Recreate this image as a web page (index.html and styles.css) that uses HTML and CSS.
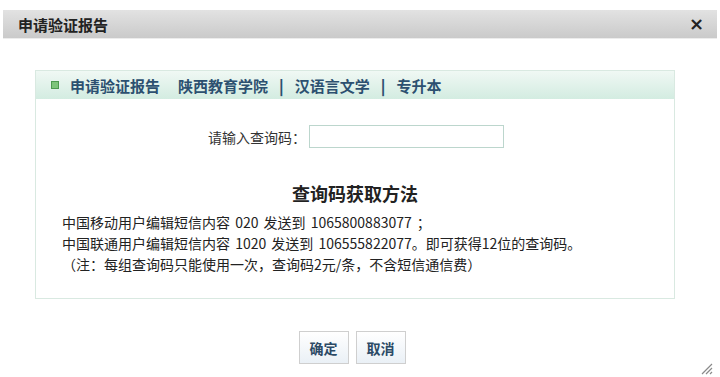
FILE: index.html
```html
<!DOCTYPE html>
<html lang="zh-CN">
<head>
    <meta charset="UTF-8">
    <title>申请验证报告</title>
    <link rel="stylesheet" href="styles.css">
</head>
<body>
    <div class="dialog">
        <div class="dialog-title">
            <span class="dialog-title-text">申请验证报告</span>
            <span class="dialog-close">×</span>
        </div>
        <div class="dialog-body">
            <div class="report-box">
                <div class="report-head">
                    <span class="head-mark"></span>
                    <span class="head-name">申请验证报告</span>
                    <span class="head-info">陕西教育学院<b class="sep">|</b>汉语言文学<b class="sep">|</b>专升本</span>
                </div>
                <div class="report-content">
                    <div class="query-row">
                        <label class="query-label" for="queryCode">请输入查询码：</label>
                        <input type="text" class="query-input" id="queryCode">
                    </div>
                    <h2 class="method-title">查询码获取方法</h2>
                    <p class="method-line">中国移动用户编辑短信内容 020 发送到 1065800883077 ；</p>
                    <p class="method-line">中国联通用户编辑短信内容 1020 发送到 106555822077。即可获得12位的查询码。</p>
                    <p class="method-line">（注：每组查询码只能使用一次，查询码2元/条，不含短信通信费）</p>
                </div>
            </div>
            <div class="button-row">
                <button class="dlg-button">确定</button>
                <button class="dlg-button">取消</button>
            </div>
        </div>
        <svg class="resize-grip" width="14" height="14" viewBox="0 0 14 14">
            <path d="M13 3 L3 13 M13 7 L7 13 M13 11 L11 13" stroke="#8a8a8a" stroke-width="1.2" fill="none"/>
        </svg>
    </div>
</body>
</html>
```

FILE: styles.css
```css
body {
    margin: 0;
    background: #fff;
    font-family: "Noto Sans CJK SC", "Liberation Sans", sans-serif;
    color: #333;
}

.dialog {
    position: relative;
    width: 720px;
    height: 377px;
    padding-top: 10px;
    box-sizing: border-box;
    overflow: hidden;
}

.dialog-title {
    margin: 0 3px;
    height: 28px;
    display: flex;
    align-items: center;
    justify-content: space-between;
    padding: 0 13px 0 15px;
    background: linear-gradient(#e2e2e2, #cacaca);
    border-bottom: 1px solid #ececec;
}

.dialog-title-text {
    font-size: 15px;
    font-weight: bold;
    color: #222;
}

.dialog-close {
    font-family: "DejaVu Sans", sans-serif;
    font-size: 18px;
    font-weight: bold;
    color: #222;
    line-height: 1;
}

.dialog-body {
    padding: 31px 45px 0 35px;
}

.report-box {
    border: 1px solid #d9e9e1;
}

.report-head {
    height: 28px;
    display: flex;
    align-items: center;
    padding-left: 15px;
    background: linear-gradient(#f0f8f4, #d3ece1);
    font-size: 15px;
    font-weight: bold;
    color: #2c5070;
}

.head-mark {
    width: 6px;
    height: 6px;
    border: 1px solid #4b9a4f;
    background: #7cc47a;
    margin-right: 11px;
}

.head-name {
    margin-right: 18px;
}

.sep {
    margin: 0 11px;
}

.report-content {
    padding: 26px 0 23px 26px;
}

.query-row {
    display: flex;
    align-items: center;
    height: 23px;
    padding-left: 146px;
}

.query-label {
    font-size: 14px;
    color: #333;
}

.query-input {
    width: 195px;
    height: 23px;
    box-sizing: border-box;
    margin: 0 0 0 3px;
    border: 1px solid #bcd6cd;
    background: #fff;
    outline: none;
}

.method-title {
    margin: 33px 0 7px;
    padding-right: 26px;
    text-align: center;
    font-size: 18px;
    line-height: 24px;
    font-weight: bold;
    color: #222;
}

.method-line {
    margin: 0;
    font-size: 14px;
    line-height: 21px;
    word-spacing: 2px;
    color: #222;
}

.button-row {
    display: flex;
    justify-content: center;
    gap: 7px;
    margin-top: 32px;
    padding-right: 6px;
}

.dlg-button {
    width: 50px;
    height: 33px;
    padding: 0;
    border: 1px solid #cfcfcf;
    background: linear-gradient(#ffffff, #eaf0f6);
    font-family: "Noto Sans CJK SC", sans-serif;
    font-size: 14px;
    font-weight: bold;
    color: #2c4a66;
    cursor: pointer;
}

.resize-grip {
    position: absolute;
    right: 7px;
    bottom: 2px;
}
```
